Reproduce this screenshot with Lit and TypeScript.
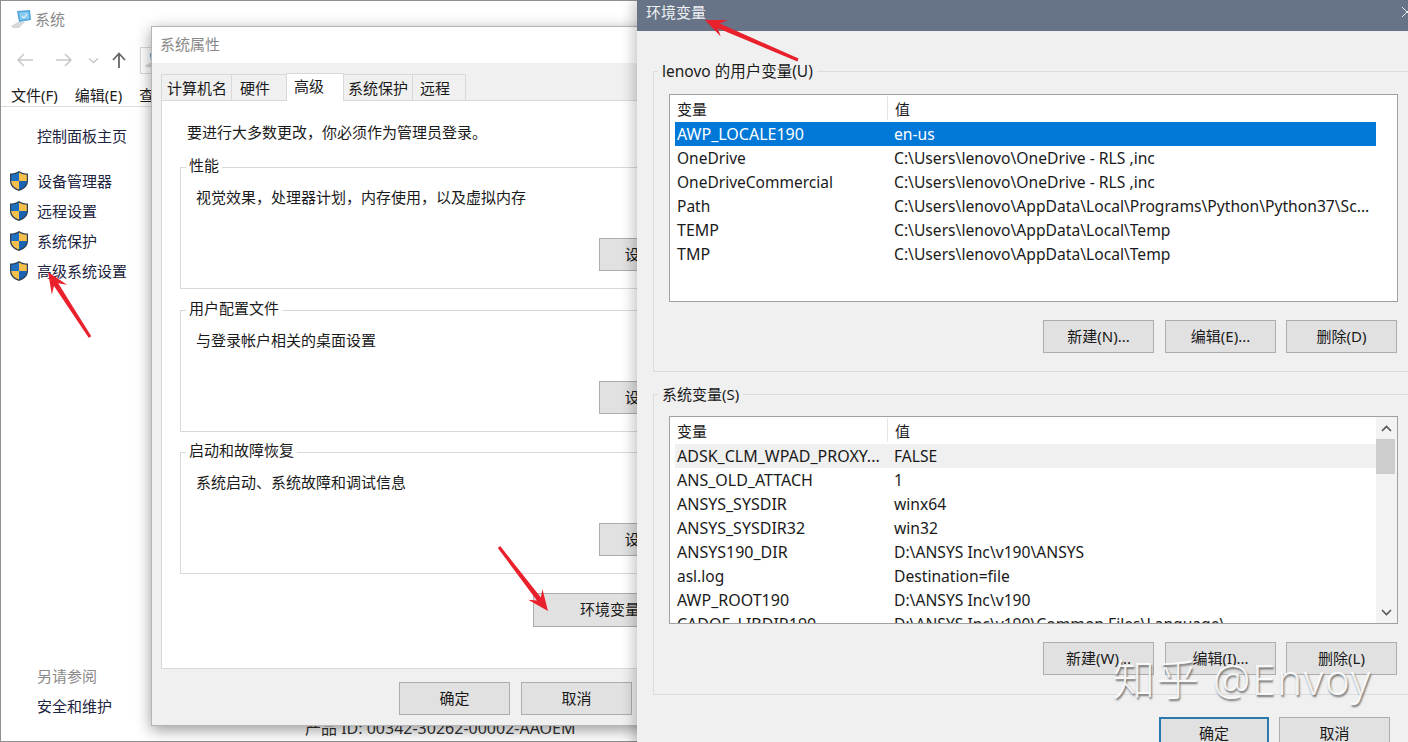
import { LitElement, html, css, svg } from "lit";
import { customElement } from "lit/decorators.js";

const userVars: [string, string][] = [
  ["AWP_LOCALE190", "en-us"],
  ["OneDrive", "C:\\Users\\lenovo\\OneDrive - RLS ,inc"],
  ["OneDriveCommercial", "C:\\Users\\lenovo\\OneDrive - RLS ,inc"],
  ["Path", "C:\\Users\\lenovo\\AppData\\Local\\Programs\\Python\\Python37\\Sc..."],
  ["TEMP", "C:\\Users\\lenovo\\AppData\\Local\\Temp"],
  ["TMP", "C:\\Users\\lenovo\\AppData\\Local\\Temp"],
];
const sysVars: [string, string][] = [
  ["ADSK_CLM_WPAD_PROXY...", "FALSE"],
  ["ANS_OLD_ATTACH", "1"],
  ["ANSYS_SYSDIR", "winx64"],
  ["ANSYS_SYSDIR32", "win32"],
  ["ANSYS190_DIR", "D:\\ANSYS Inc\\v190\\ANSYS"],
  ["asl.log", "Destination=file"],
  ["AWP_ROOT190", "D:\\ANSYS Inc\\v190"],
  ["CADOE_LIBDIR190", "D:\\ANSYS Inc\\v190\\Common Files\\Language\\"],
];

const shield = html`<svg class="shield" width="20" height="22" viewBox="0 0 20 22">
  <path d="M10 1 C7 3 4 3.600 1 3.600 V11 C1 16 5 19.500 10 21 C15 19.500 19 16 19 11 V3.600 C16 3.600 13 3 10 1Z" fill="#2f3f55"/>
  <path d="M10 2.400 C7.400 4 4.600 4.600 2.200 4.700 V11 H10Z" fill="#1f6fc0"/>
  <path d="M10 2.400 C12.600 4 15.400 4.600 17.800 4.700 V11 H10Z" fill="#f4bf4a"/>
  <path d="M2.200 11 H10 V19.600 C6 18.200 2.400 15.400 2.200 11Z" fill="#f4bf4a"/>
  <path d="M17.800 11 H10 V19.600 C14 18.200 17.600 15.400 17.800 11Z" fill="#1a63b3"/>
</svg>`;

const computer = (w: number) => html`<svg width=${w} height=${w} viewBox="0 0 22 20">
  <path d="M1 17 L8 13 H15 L9 19 H3Z" fill="#d5d8db"/>
  <path d="M7 2 L20 1 L21 11 L9 13Z" fill="#4fa6dc"/>
  <path d="M9 3.500 L18.600 2.800 L19.200 9.800 L10.200 11Z" fill="#8accef"/>
  <path d="M12 7 l2 2 l3 -4" fill="none" stroke="#fff" stroke-width="1"/>
</svg>`;

function arrow(x1: number, y1: number, x2: number, y2: number) {
  const dx = x2 - x1, dy = y2 - y1;
  const len = Math.hypot(dx, dy);
  const ux = dx / len, uy = dy / len, nx = -uy, ny = ux;
  const p = (along: number, off: number) =>
    `${(x1 + ux * along + nx * off).toFixed(1)},${(y1 + uy * along + ny * off).toFixed(1)}`;
  return svg`<polygon fill="#e8212d" points="${[
    p(0, -1.5), p(len - 15, -2.5), p(len - 21, -9), p(len, 0), p(len - 21, 9), p(len - 15, 2.5), p(0, 1.5),
  ].join(" ")}"/>`;
}

@customElement("app-root")
export class AppRoot extends LitElement {
  static styles = css`
    :host {
      display: block;
      position: relative;
      width: 1408px;
      height: 742px;
      overflow: hidden;
      background: #fff;
      font: 15px/20px "Noto Sans", "Noto Sans CJK SC", sans-serif;
      color: #1a1a1a;
    }
    * { box-sizing: border-box; }
    .win { position: absolute; }

    /* system window */
    .sys {
      left: 0; top: 0; width: 700px; height: 742px;
      border: 1px solid #8f8f8f;
      background: #fff;
      display: flex;
      flex-direction: column;
    }
    .sys-title { height: 39px; display: flex; align-items: center; gap: 3px; padding: 0 0 4px 9px; color: #8a8a8a; }
    .nav { height: 40px; display: flex; align-items: center; color: #c4c4c4; }
    .nav svg { flex: none; }
    .addr {
      width: 300px; height: 27px; margin-left: 5px;
      border: 1px solid #d9d9d9;
      display: flex; align-items: center; padding-left: 3px;
    }
    .menu {
      height: 27px; flex: none;
      display: flex; gap: 17px; align-items: center;
      padding: 3px 0 0 10px;
      border-bottom: 1px solid #dcdcdc;
    }
    .sys-main { flex: 1; display: flex; min-height: 0; }
    .side {
      width: 150px; flex: none;
      display: flex; flex-direction: column;
      padding: 19px 0 20px 36px;
      color: #1c2440;
    }
    .side .home { height: 20px; margin-bottom: 20px; }
    .side .item { height: 30px; display: flex; align-items: center; white-space: nowrap; position: relative; }
    .shield { position: absolute; left: -28px; top: 4px; }
    .side .see { margin-top: auto; height: 30px; display: flex; align-items: center; color: #8a8a8a; }
    .prod {
      flex: 1; display: flex; align-items: flex-end;
      padding: 0 0 3px 154px; white-space: nowrap; color: #333; font-size: 16px;
    }

    /* properties window */
    .props {
      left: 151px; top: 26px; width: 624px; height: 700px;
      background: #f0f0f0;
      border: 1px solid #b5b5b5;
      box-shadow: 0 4px 14px rgba(0,0,0,.4);
      display: flex; flex-direction: column;
    }
    .props-title { height: 36px; flex: none; background: #fff; display: flex; align-items: center; padding: 0 0 2px 8px; color: #8a8a8a; }
    .tabs { height: 37px; flex: none; display: flex; align-items: flex-end; padding-left: 10px; position: relative; z-index: 1; }
    .tab {
      height: 26px;
      background: #f0f0f0;
      border: 1px solid #d9d9d9; border-bottom: none; margin-left: -1px;
      display: flex; align-items: center; white-space: nowrap;
      padding: 0 0 0 0;
    }
    .t1 { padding-left: 5px; padding-right: 4px; }
    .t2 { padding-left: 8px; padding-right: 16px; }
    .t3 { padding-left: 7px; padding-right: 19px; }
    .t4 { padding-left: 4px; padding-right: 4px; }
    .t5 { padding-left: 7px; padding-right: 15px; }
    .tab.on { height: 28px; margin-bottom: -1px; background: #fff; padding-bottom: 4px; border-bottom: none; }
    .panel {
      width: 603px; height: 569px; margin-left: 9px; flex: none;
      background: #fff; border: 1px solid #d9d9d9;
      padding: 21px 0 0 18px;
    }
    .panel .note { margin: 0 0 15px 7px; height: 20px; }
    .panel fieldset { width: 560px; height: 132px; margin: 0 0 10px; padding: 0; border: 1px solid #d9d9d9; }
    .panel fieldset.first { margin-bottom: 11px; }
    .panel fieldset.last { margin-bottom: 0; }
    .panel legend { margin-left: 5px; padding: 0 3px; line-height: 17px; height: 20px; }
    .panel .desc { margin: 10px 0 0 15px; height: 20px; }
    .panel .sbtn { display: flex; margin: 31px 0 0 418px; width: 111px; }
    .btn {
      height: 33px; width: 111px;
      background: #e1e1e1; border: 1px solid #adadad;
      display: inline-flex; align-items: center; justify-content: center;
      white-space: nowrap; color: #1a1a1a; padding-bottom: 2px;
    }
    .panel .env { margin: 19px 0 0 353px; width: 176px; height: 34px; justify-content: flex-start; padding-left: 46px; }
    .props-foot { display: flex; gap: 11px; padding: 13px 0 0 247px; }

    /* env window */
    .env-win {
      left: 637px; top: 0; width: 790px; height: 760px;
      background: #f0f0f0;
      box-shadow: -4px 0 12px rgba(0,0,0,.22);
    }
    .env-title {
      height: 31px; background: #677386; color: #eef0f3;
      display: flex; align-items: center;
      padding: 0 14px 7px 9px;
    }
    .close { position: absolute; left: 764px; top: 6px; }
    .env-body { padding: 30px 0 0 16px; }
    .env-body fieldset {
      width: 760px; margin: 0 0 12px; padding: 13px 0 0 15px;
      border: 1px solid #dcdcdc;
    }
    .env-body fieldset.one { height: 311px; }
    .env-body fieldset.two { height: 311px; padding-top: 12px; margin-bottom: 21px; }
    .env-body legend { margin-left: -11px; padding: 0 4px; line-height: 20px; height: 20px; color: #1a1a1a; }
    .latin { font-size: 15.5px; }
    .list {
      width: 729px; height: 208px;
      border: 1px solid #a0a0a0; background: #fff;
      display: flex; overflow: hidden;
    }
    .cols { width: 706px; flex: none; padding: 0 0 0 5px; }
    .row { display: grid; grid-template-columns: 212px 1fr; height: 24px; line-height: 24px; white-space: nowrap; overflow: hidden; font-size: 15.5px; }
    .row span { padding-left: 2px; overflow: hidden; }
    .row span.up { font-size: 16px; }
    .row span + span { padding-left: 7px; font-size: 15.65px; }
    .head { height: 27px; line-height: 29px; font-size: 15px; }
    .head span + span { border-left: 1px solid #e5e5e5; height: 24px; margin-top: 1px; line-height: 27px; font-size: 15px; }
    .row.sel { background: #0078d7; color: #fff; }
    .row.hov { background: #f0f0f0; }
    .sb { width: 21px; flex: none; display: flex; flex-direction: column; background: #f3f3f3; position: relative; }
    .sb-arrow { height: 22px; flex: none; display: flex; align-items: center; justify-content: center; background: #f3f3f3; }
    .thumb { width: 19px; height: 35px; flex: none; background: #cdcdcd; }
    .sb-gap { flex: 1; }
    .btns { display: flex; gap: 11px; padding: 18px 0 0 374px; }
    .btns .btn:last-child { margin-left: -1px; }
    .ok-row { display: flex; gap: 10px; padding-left: 506px; margin-top: 22px; }
    .ok-row .btn { width: 111px; }
    .ok-row .primary { width: 110px; border: 2px solid #2a78ac; }

    .arrows { position: absolute; left: 0; top: 0; pointer-events: none; }
    .mark {
      position: absolute; left: 1113px; top: 644px;
      font-size: 42px; line-height: 70px; font-weight: 300; white-space: nowrap;
      color: rgba(255,255,255,.9);
      text-shadow: 1px 2px 2px rgba(80,80,80,.8);
      letter-spacing: 1.7px;
    }
  `;

  private renderRows(rows: [string, string][], marked: string) {
    return rows.map(
      (r, i) => html`<div class="row ${i === 0 ? marked : ""}"><span class=${r[0] === r[0].toUpperCase() ? "up" : ""}>${r[0]}</span><span>${r[1]}</span></div>`
    );
  }

  render() {
    return html`
      <div class="win sys">
        <div class="sys-title">${computer(22)}<span>系统</span></div>
        <div class="nav">
          <svg width="134" height="20" viewBox="0 0 134 20" fill="none" stroke="#c8c8c8" stroke-width="1.5">
            <path d="M17 10 H32 M23 4 L17 10 L23 16"/>
            <path d="M55 10 H70 M64 4 L70 10 L64 16"/>
            <path d="M88 8.500 L92.500 12.500 L97 8.500"/>
            <path d="M118 18 V4 M112 10 L118 3.500 L124 10" stroke="#666" stroke-width="1.800"/>
          </svg>
          <div class="addr">${computer(18)}</div>
        </div>
        <div class="menu"><span>文件(F)</span><span>编辑(E)</span><span>查看(V)</span></div>
        <div class="sys-main">
          <div class="side">
            <div class="home">控制面板主页</div>
            <div class="item">${shield}设备管理器</div>
            <div class="item">${shield}远程设置</div>
            <div class="item">${shield}系统保护</div>
            <div class="item">${shield}高级系统设置</div>
            <div class="see">另请参阅</div>
            <div class="item">安全和维护</div>
          </div>
          <div class="prod">产品 ID: 00342-30262-00002-AAOEM</div>
        </div>
      </div>

      <div class="win props">
        <div class="props-title">系统属性</div>
        <div class="tabs">
          <div class="tab t1">计算机名</div>
          <div class="tab t2">硬件</div>
          <div class="tab t3 on">高级</div>
          <div class="tab t4">系统保护</div>
          <div class="tab t5">远程</div>
        </div>
        <div class="panel">
          <div class="note">要进行大多数更改，你必须作为管理员登录。</div>
          <fieldset class="first">
            <legend>性能</legend>
            <div class="desc">视觉效果，处理器计划，内存使用，以及虚拟内存</div>
            <div class="btn sbtn">设置(S)...</div>
          </fieldset>
          <fieldset>
            <legend>用户配置文件</legend>
            <div class="desc">与登录帐户相关的桌面设置</div>
            <div class="btn sbtn">设置(E)...</div>
          </fieldset>
          <fieldset class="last">
            <legend>启动和故障恢复</legend>
            <div class="desc">系统启动、系统故障和调试信息</div>
            <div class="btn sbtn">设置(T)...</div>
          </fieldset>
          <div class="btn sbtn env">环境变量(N)...</div>
        </div>
        <div class="props-foot">
          <div class="btn">确定</div>
          <div class="btn">取消</div>
          <div class="btn">应用(A)</div>
        </div>
      </div>

      <div class="win env-win">
        <div class="env-title"><span>环境变量</span></div>
        <svg class="close" width="12" height="12" viewBox="0 0 12 12" stroke="#e8ebef" fill="none" stroke-width="1">
          <path d="M1 1 L11 11 M11 1 L1 11"/>
        </svg>
        <div class="env-body">
          <fieldset class="one">
            <legend class="latin">lenovo 的用户变量(U)</legend>
            <div class="list">
              <div class="cols">
                <div class="row head"><span>变量</span><span>值</span></div>
                ${this.renderRows(userVars, "sel")}
              </div>
            </div>
            <div class="btns">
              <div class="btn">新建(N)...</div>
              <div class="btn">编辑(E)...</div>
              <div class="btn">删除(D)</div>
            </div>
          </fieldset>
          <fieldset class="two">
            <legend>系统变量(S)</legend>
            <div class="list">
              <div class="cols">
                <div class="row head"><span>变量</span><span>值</span></div>
                ${this.renderRows(sysVars, "hov")}
              </div>
              <div class="sb">
                <div class="sb-arrow"><svg width="11" height="7" viewBox="0 0 11 7" fill="none" stroke="#555" stroke-width="1.600"><path d="M1 6 L5.500 1.500 L10 6"/></svg></div>
                <div class="thumb"></div>
                <div class="sb-gap"></div>
                <div class="sb-arrow"><svg width="11" height="7" viewBox="0 0 11 7" fill="none" stroke="#555" stroke-width="1.600"><path d="M1 1 L5.500 5.500 L10 1"/></svg></div>
              </div>
            </div>
            <div class="btns">
              <div class="btn">新建(W)...</div>
              <div class="btn">编辑(I)...</div>
              <div class="btn">删除(L)</div>
            </div>
          </fieldset>
          <div class="ok-row">
            <div class="btn primary">确定</div>
            <div class="btn">取消</div>
          </div>
        </div>
      </div>

      <svg class="arrows" width="1408" height="742" viewBox="0 0 1408 742">
        ${arrow(90, 337, 48, 272)}
        ${arrow(798, 60, 705, 20)}
        ${arrow(499, 547, 548, 611)}
      </svg>
      <div class="mark">知乎 @Envoy</div>
    `;
  }
}
